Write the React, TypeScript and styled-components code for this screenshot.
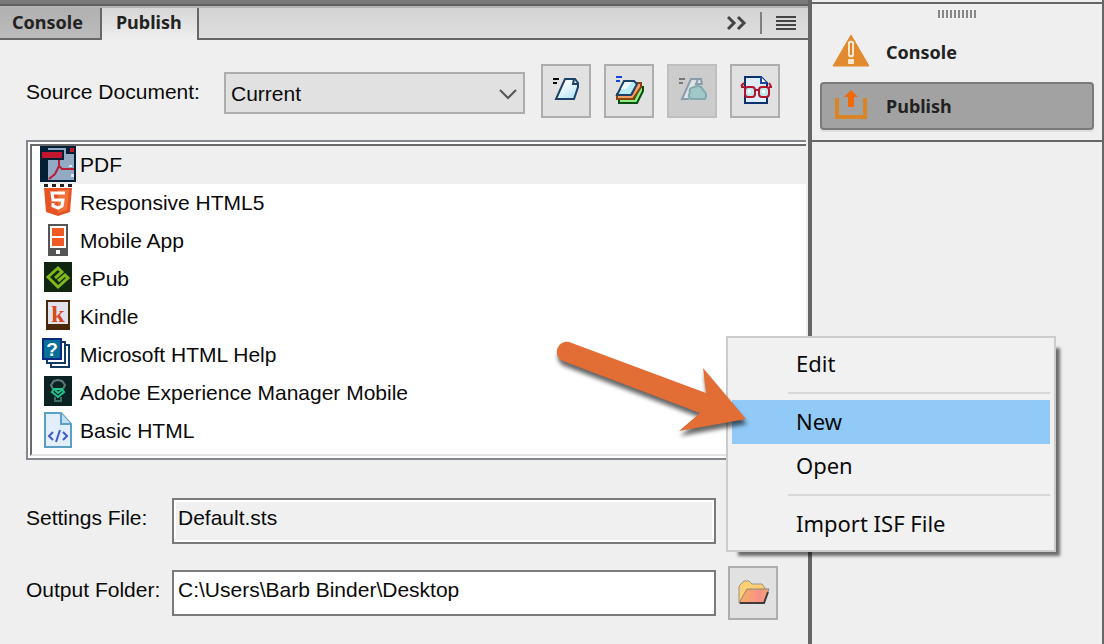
import React, { useState } from "react";
import styled, { createGlobalStyle, css } from "styled-components";

const Global = createGlobalStyle`
  *, *::before, *::after { box-sizing: border-box; }
  body { margin: 0; background: #efefef; }
  button, input, select { font: inherit; color: inherit; margin: 0; }
`;

const formFont = `"Liberation Sans", Arial, sans-serif`;
const uiFont = `"Noto Sans", "Open Sans", sans-serif`;

const Window = styled.div`
  display: flex;
  min-height: 100vh;
  background: #efefef;
  color: #0a0a0a;
  font-family: ${formFont};
  font-size: 21px;
  line-height: 28px;
`;

const MainPanel = styled.main`
  flex: 1;
  min-width: 0;
  border-right: 4px solid #666;
`;

const TitleStrip = styled.div`
  height: 6px;
  background: #787878;
  border-bottom: 2px solid #606060;
`;

const TabBar = styled.div`
  display: flex;
  height: 34px;
  background: linear-gradient(#d4d4d4, #dedede);
  border-top: 2px solid #b4b4b4;
  border-bottom: 2px solid #666;
`;

const Tab = styled.button<{ $active?: boolean }>`
  height: ${(p) => (p.$active ? "32px" : "30px")};
  padding: ${(p) => (p.$active ? "0 15px 4px 14px" : "0 17px 2px 12px")};
  border: 0;
  border-right: 2px solid #666;
  background: ${(p) => (p.$active ? "linear-gradient(#d6d6d6, #efefef)" : "linear-gradient(#b0b0b0, #bcbcbc)")};
  font: bold 18px/26px ${uiFont};
  color: #222;
`;

const TabTools = styled.div`
  display: flex;
  align-items: center;
  margin-left: auto;
  padding: 0 12px 0 0;
`;

const ToolButton = styled.button`
  display: flex;
  padding: 0;
  border: 0;
  background: none;
`;

const ToolDivider = styled.span`
  width: 2px;
  height: 22px;
  margin: 0 14px 0 13px;
  background: #808080;
`;

const SourceRow = styled.div`
  display: flex;
  align-items: center;
  gap: 16px;
  padding: 24px 28px 22px 26px;
`;

const SourceLabel = styled.label`
  width: 182px;
  padding-top: 2px;
  white-space: nowrap;
`;

const SelectBox = styled.div`
  position: relative;
  flex: 1;
  min-width: 0;
  padding-top: 4px;

  svg {
    position: absolute;
    right: 8px;
    top: 20px;
    pointer-events: none;
  }
`;

const Select = styled.select`
  display: block;
  width: 100%;
  height: 42px;
  padding: 2px 32px 0 5px;
  appearance: none;
  border: 2px solid #adadad;
  border-radius: 0;
  background: #e1e1e1;
`;

const ButtonGroup = styled.div`
  display: flex;
  gap: 13px;
`;

const IconButton = styled.button`
  display: block;
  flex: none;
  width: 50px;
  height: 54px;
  padding: 0;
  border: 2px solid #adadad;
  background: #e1e1e1;

  svg { display: block; }

  &:disabled {
    border-color: #bfbfbf;
    background: #ccc;
  }
`;

const ListFrame = styled.div`
  margin: 0 2px 0 26px;
  padding: 2px 0 2px 2px;
  border: 2px solid #828790;
  border-right: 0;
  background: #fff;
`;

const FormatList = styled.ul`
  margin: 0;
  padding: 0 0 4px;
  list-style: none;
  border-top: 2px solid #696969;
  border-left: 2px solid #696969;
  border-bottom: 2px solid #e3e3e3;
`;

const FormatItem = styled.li<{ $selected: boolean }>`
  display: flex;
  align-items: center;
  gap: 4px;
  height: 38px;
  margin-left: 8px;
  background: ${(p) => (p.$selected ? "#efefef" : "transparent")};

  svg { flex: none; margin-bottom: 2px; }
`;

const Fields = styled.div`
  display: grid;
  gap: 18px;
  padding: 34px 30px 24px 26px;
`;

const FieldRow = styled.div`
  display: flex;
  align-items: center;
  gap: 12px;
  height: 54px;
`;

const FieldLabel = styled.label`
  width: 134px;
  padding-bottom: 6px;
  white-space: nowrap;
`;

const Field = styled.input`
  flex: 1;
  min-width: 0;
  height: 46px;
  padding: 0 4px 6px;
  border: 2px solid #7a7a7a;
  border-radius: 0;
  background: #fff;

  &:read-only {
    background: #f0f0f0;
    box-shadow: inset 0 0 0 2px #fff;
  }
`;

const MenuAnchor = styled.div`
  position: relative;
  flex: none;
  width: 50px;
  height: 54px;
`;

const Menu = styled.div`
  position: absolute;
  left: -2px;
  top: -158px;
  width: 330px;
  padding: 4px;
  border: 2px solid #ccc;
  background: #f1f1f1;
  box-shadow: 8px 8px 3px -4px rgba(0, 0, 0, 0.55);
`;

const MenuItem = styled.button<{ $highlighted?: boolean }>`
  display: block;
  width: 100%;
  height: 44px;
  padding: 0 0 2px 64px;
  border: 0;
  text-align: left;
  background: ${(p) => (p.$highlighted ? "#91c9f7" : "none")};
  font: 22px/40px ${uiFont};
`;

const MenuSeparator = styled.hr`
  height: 2px;
  margin: 6px 0 6px 56px;
  border: 0;
  background: #d7d7d7;
`;

const Pointer = styled.svg`
  position: absolute;
  left: -180px;
  top: -160px;
  overflow: visible;
  pointer-events: none;
  filter: drop-shadow(1px 5px 2px rgba(0, 0, 0, 0.6));
`;

const Dock = styled.aside`
  flex: none;
  width: 292px;
  padding-top: 2px;
  border-right: 2px solid #666;
`;

const DockGroup = styled.div`
  display: grid;
  gap: 6px;
  padding: 6px 8px 10px;
  border-top: 2px solid #666;
  border-bottom: 2px solid #666;
`;

const Gripper = styled.div`
  justify-self: center;
  width: 38px;
  height: 8px;
  margin-bottom: 4px;
  background: repeating-linear-gradient(90deg, #888 0 2px, transparent 2px 4px);
`;

const DockButton = styled.button<{ $active?: boolean }>`
  display: flex;
  align-items: center;
  gap: 16px;
  height: 48px;
  padding: 0 0 0 10px;
  border: 2px solid transparent;
  border-radius: 4px;
  background: none;
  font: bold 18px/26px ${uiFont};
  color: #222;
  ${(p) => p.$active && css`
    border-color: #7a7a7a;
    background: #a2a2a2;
    box-shadow: 0 2px 0 #e0e0e0;
  `}

  svg { margin-bottom: 4px; }
`;

/* Toolbar icons share one 46x50 box: the inside of an IconButton. */
const Glyph = ({ children }: { children: React.ReactNode }) => (
  <svg width="46" height="50" viewBox="2 2 46 50" aria-hidden="true">{children}</svg>
);

const PublishIcon = () => (
  <Glyph>
    <defs>
      <linearGradient id="sheet" x1="0" y1="0" x2="0.7" y2="1">
        <stop offset="0.3" stopColor="#fff" /><stop offset="1" stopColor="#b5e6f5" />
      </linearGradient>
    </defs>
    <path d="M12 14h6v2h-6zM12 18h4v2h-4z" fill="#000" />
    <path d="M24 15H34L37 19V23L33 35H15Z" fill="url(#sheet)" stroke="#1d4268" strokeWidth="2" />
    <path d="M33 15L32 20H37" fill="none" stroke="#1d4268" strokeWidth="2" />
  </Glyph>
);

const PublishAllIcon = () => (
  <Glyph>
    <path d="M12 12h6v2h-6zM12 16h4v2h-4z" fill="#1444e6" />
    <path d="M15 34V39H33L39 27V23H36L30 35Z" fill="#8cf07a" stroke="#0b4d12" strokeWidth="2" />
    <path d="M13 30V35H29L37 23V19H33L28 30Z" fill="#f2a366" stroke="#8a4310" strokeWidth="2" />
    <path d="M20 17H30L33 20L27 31H13Z" fill="#b9ecf8" stroke="#1d4268" strokeWidth="2" />
    <path d="M21 18H28L22 25H17Z" fill="#f2fcff" />
  </Glyph>
);

const PublishCloudIcon = () => (
  <Glyph>
    <path d="M12 14h6v2h-6zM12 18h4v2h-4z" fill="#777" />
    <path d="M24 15H34L35 21L21 35H15Z" fill="#dce4e8" />
    <path d="M22 35H15L24 15H34L35 21M31 15L29 20H35" fill="none" stroke="#8a9cab" strokeWidth="2" />
    <path d="M24 35Q20 32 23 29Q21 24 27 23Q34 20 36 26Q41 30 38 35Z" fill="#a0c8c8" stroke="#84aaae" strokeWidth="2" />
  </Glyph>
);

const PreviewIcon = () => (
  <Glyph>
    <path d="M15 13H31L37 19V39H15Z" fill="#deecfb" stroke="#0a3070" strokeWidth="2" />
    <path d="M31 13V19H37" fill="#fff" stroke="#1747b5" strokeWidth="2" />
    <g fill="#bfeaf0" stroke="#b3152b" strokeWidth="2">
      <rect x="15" y="23" width="10" height="10" rx="3" />
      <rect x="29" y="23" width="10" height="10" rx="3" />
      <path d="M25 26H29M15 23H11M14 19L11 22M39 23H42M39 19L41 22" fill="none" />
    </g>
    <path d="M18 26h3v3h-3zM32 26h3v3h-3z" fill="#fff" />
  </Glyph>
);

const FolderIcon = () => (
  <Glyph>
    <defs>
      <linearGradient id="folderFront" x1="0" y1="0" x2="1" y2="0">
        <stop offset="0" stopColor="#f9b060" /><stop offset="0.7" stopColor="#f79088" /><stop offset="1" stopColor="#f5a870" />
      </linearGradient>
    </defs>
    <path d="M11 37V20L16 15H21L24 18H34L37 22L35 36Z" fill="#ffcf74" stroke="#9b9484" strokeWidth="1" />
    <path d="M11 37L19 23H41L36 37Z" fill="url(#folderFront)" stroke="#8e8778" strokeWidth="1" />
    <path d="M12 37H36L40 26" fill="none" stroke="#403c3c" strokeWidth="2" />
  </Glyph>
);

/* Format icons share one 36x36 box. */
const formatArt: Record<string, React.ReactNode> = {
  PDF: (
    <>
      <path d="M0 0h36v36H0z" fill="#041e33" />
      <path d="M8 2h18v6h8v26H8z" fill="#93aac5" />
      <path d="M2 4h22v10H2z" fill="#041e33" />
      <path d="M2 6h20v6H2zM30 2h4v4h-4z" fill="#c2172f" />
      <path d="M19 14V20L22 23H34M19 20L15 28L9 33" fill="none" stroke="#b81e36" strokeWidth="2" />
      <path d="M29 19h3v2h-3zM31 28h3v3h-3z" fill="#dce6f0" />
    </>
  ),
  "Responsive HTML5": (
    <>
      <path d="M4 0h4v3H4zM12 0h4v3h-4zM20 0h4v3h-4zM28 0h4v3h-4z" fill="#222" />
      <path d="M4 4H32L30 28L18 32L6 28Z" fill="#e65426" />
      <path d="M18 6H29L27 26L18 29Z" fill="#f0723a" />
      <path d="M25 9H12L13 16H23L22 22L18 24L13 22V19" fill="none" stroke="#fff" strokeWidth="3" />
    </>
  ),
  "Mobile App": (
    <>
      <path d="M8 2h20v32H8z" fill="#555" />
      <path d="M10 4h16v22H10z" fill="#fff" />
      <path d="M12 6h12v8H12zM12 16h12v8H12z" fill="#f15a24" />
      <path d="M16 28h4v4h-4z" fill="#fff" />
    </>
  ),
  ePub: (
    <>
      <path d="M4 2h28v30H4z" fill="#10260f" />
      <path d="M15 18L22 12L18 8L8 17L18 27L28 18L25 15L18 21" fill="none" stroke="#80b81c" strokeWidth="3" />
    </>
  ),
  Kindle: (
    <>
      <path d="M6 2h24v30H6z" fill="#4a2808" />
      <path d="M8 4h20v22H8z" fill="#e2e2ec" />
      <text x="18" y="24" textAnchor="middle" fontFamily="Liberation Serif, serif" fontWeight="bold" fontSize="24" fill="#d9481c">k</text>
    </>
  ),
  "Microsoft HTML Help": (
    <>
      <path d="M11 9H29V31H11Z" fill="#fff" stroke="#123a66" strokeWidth="2" />
      <path d="M7 6H25V27H7Z" fill="#fff" stroke="#123a66" strokeWidth="2" />
      <path d="M3 3H21V23H3Z" fill="#087098" stroke="#0a2a80" strokeWidth="2" />
      <text x="12" y="20" textAnchor="middle" fontFamily="Liberation Sans, sans-serif" fontWeight="bold" fontSize="19" fill="#fff">?</text>
    </>
  ),
  "Adobe Experience Manager Mobile": (
    <>
      <path d="M4 2h28v30H4z" fill="#0a2222" />
      <path d="M13 15L11 11L14 7L18 6L22 7L25 11L23 15" fill="none" stroke="#5e7a78" strokeWidth="2" />
      <path d="M15 23V27H21V23" fill="none" stroke="#3c706a" strokeWidth="2" />
      <path d="M14 15H22L24 18L18 23L12 18ZM15 16L18 19L22 16" fill="none" stroke="#1fc48a" strokeWidth="2" />
    </>
  ),
  "Basic HTML": (
    <>
      <path d="M5 1H21L31 12V35H5Z" fill="#e2effa" stroke="#5b9fc4" strokeWidth="2" />
      <path d="M21 1V12H31" fill="#c3deef" stroke="#5b9fc4" strokeWidth="2" />
      <path d="M13 20L9 24L13 28M23 20L27 24L23 28M20 18L16 30" fill="none" stroke="#3f5bd0" strokeWidth="2" />
    </>
  ),
};

const formats = Object.keys(formatArt);

export default function App() {
  const [selected, setSelected] = useState("PDF");
  const [folder, setFolder] = useState("C:\\Users\\Barb Binder\\Desktop");

  return (
    <>
      <Global />
      <Window>
        <MainPanel>
          <TitleStrip />
          <TabBar>
            <Tab>Console</Tab>
            <Tab $active>Publish</Tab>
            <TabTools>
              <ToolButton aria-label="Collapse">
                <svg width="20" height="16" viewBox="0 0 20 16" fill="none" stroke="#444" strokeWidth="3">
                  <path d="M1 2L7 8L1 14M11 2L17 8L11 14" />
                </svg>
              </ToolButton>
              <ToolDivider />
              <ToolButton aria-label="Panel menu">
                <svg width="20" height="14" viewBox="0 0 20 14">
                  <path d="M0 0h20v2H0zM0 4h20v2H0zM0 8h20v2H0zM0 12h20v2H0z" fill="#444" />
                </svg>
              </ToolButton>
            </TabTools>
          </TabBar>

          <SourceRow>
            <SourceLabel htmlFor="source">Source Document:</SourceLabel>
            <SelectBox>
              <Select id="source">
                <option>Current</option>
              </Select>
              <svg width="18" height="12" viewBox="0 0 18 12" fill="none" stroke="#555" strokeWidth="2">
                <path d="M1 2L9 10L17 2" />
              </svg>
            </SelectBox>
            <ButtonGroup>
              <IconButton aria-label="Publish"><PublishIcon /></IconButton>
              <IconButton aria-label="Publish all"><PublishAllIcon /></IconButton>
              <IconButton aria-label="Publish to cloud" disabled><PublishCloudIcon /></IconButton>
              <IconButton aria-label="View output"><PreviewIcon /></IconButton>
            </ButtonGroup>
          </SourceRow>

          <ListFrame>
            <FormatList role="listbox" aria-label="Output formats">
              {formats.map((name) => (
                <FormatItem
                  key={name}
                  role="option"
                  aria-selected={name === selected}
                  $selected={name === selected}
                  onClick={() => setSelected(name)}
                >
                  <svg width="36" height="36" viewBox="0 0 36 36" aria-hidden="true">{formatArt[name]}</svg>
                  {name}
                </FormatItem>
              ))}
            </FormatList>
          </ListFrame>

          <Fields>
            <FieldRow>
              <FieldLabel htmlFor="settings">Settings File:</FieldLabel>
              <Field id="settings" readOnly value="Default.sts" />
              <MenuAnchor>
                <Menu role="menu">
                  <MenuItem role="menuitem">Edit</MenuItem>
                  <MenuSeparator />
                  <MenuItem role="menuitem" $highlighted>New</MenuItem>
                  <MenuItem role="menuitem">Open</MenuItem>
                  <MenuSeparator />
                  <MenuItem role="menuitem">Import ISF File</MenuItem>
                </Menu>
                <Pointer width="212" height="110" viewBox="548 334 212 110" aria-hidden="true">
                  <path d="M569 342L706 393L703 368L746 419L679 431L700 413L563 361A10 10 0 0 1 569 342Z" fill="#e26d35" />
                </Pointer>
              </MenuAnchor>
            </FieldRow>
            <FieldRow>
              <FieldLabel htmlFor="folder">Output Folder:</FieldLabel>
              <Field id="folder" value={folder} onChange={(e) => setFolder(e.target.value)} />
              <IconButton aria-label="Browse"><FolderIcon /></IconButton>
            </FieldRow>
          </Fields>
        </MainPanel>

        <Dock>
          <DockGroup>
            <Gripper />
            <DockButton>
              <svg width="38" height="34" viewBox="0 0 38 34" aria-hidden="true">
                <path d="M19 2L37 33H1Z" fill="#e28a30" stroke="#e28a30" strokeLinejoin="round" />
                <path d="M16 9Q19 6 22 9V23Q19 26 16 23Z" fill="#fbe6cc" />
                <path d="M18 10h2v12h-2z" fill="#dc8428" />
                <path d="M16 26h6v5h-6z" fill="#fbe6cc" />
              </svg>
              Console
            </DockButton>
            <DockButton $active>
              <svg width="38" height="34" viewBox="0 0 38 34" aria-hidden="true">
                <path d="M5 11V30H33V11" fill="none" stroke="#d98526" strokeWidth="4" />
                <path d="M19 3L26 10H22V20H16V10H12Z" fill="#f0690a" />
              </svg>
              Publish
            </DockButton>
          </DockGroup>
        </Dock>
      </Window>
    </>
  );
}
